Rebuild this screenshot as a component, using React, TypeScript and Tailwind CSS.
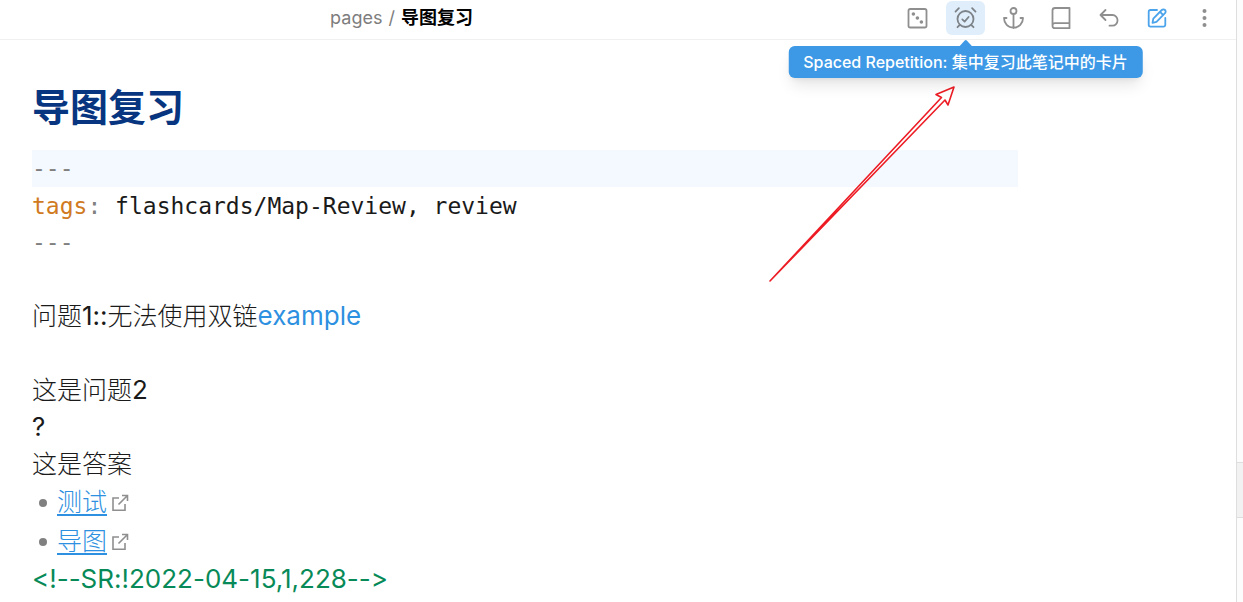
import type { ReactNode } from "react";

const strokeProps = {
  fill: "none",
  stroke: "currentColor",
  strokeWidth: 1.8,
  strokeLinecap: "round" as const,
  strokeLinejoin: "round" as const,
};

function Icon({ children }: { children: ReactNode }) {
  return (
    <svg viewBox="1 0 24 24" className="size-6" aria-hidden="true" {...strokeProps}>
      {children}
    </svg>
  );
}

function DiceIcon() {
  return (
    <Icon>
      <rect x="3.5" y="3" width="18" height="18.5" rx="1.8" />
      <g fill="currentColor" stroke="none">
        <circle cx="8.4" cy="8" r="1.8" />
        <circle cx="12.4" cy="12" r="1.8" />
        <circle cx="16.4" cy="16" r="1.8" />
      </g>
    </Icon>
  );
}

function AlarmIcon() {
  return (
    <Icon>
      <circle cx="12.5" cy="13" r="8" />
      <path d="M9.3 13.4l2.3 2.2 4-4.6M2.5 5.6l3.4-3.4M22.5 5.6l-3.4-3.4M6.8 18.8l-2.3 2.4M18.2 18.8l2.3 2.4" />
    </Icon>
  );
}

function AnchorIcon() {
  return (
    <Icon>
      <circle cx="12.5" cy="5" r="3" />
      <path d="M12.5 8v14M5.5 12H3c0 5.5 4 9.7 9.5 9.7S22 17.5 22 12h-2.5" />
    </Icon>
  );
}

function BookIcon() {
  return (
    <Icon>
      <path d="M20.5 22.2H6a2.5 2.5 0 0 1-2.5-2.5V4.5A2.5 2.5 0 0 1 6 2h14.5zM3.5 19.5A2.5 2.5 0 0 1 6 17.2h14.5" />
    </Icon>
  );
}

function UndoIcon() {
  return (
    <Icon>
      <path d="M8.5 4L3.5 9l5 5M3.5 9H15.5a5 5.3 0 0 1 0 10.7h-3" />
    </Icon>
  );
}

function EditIcon() {
  return (
    <Icon>
      <path d="M12 4H5.5A1.8 1.8 0 0 0 3.7 5.8v13A1.8 1.8 0 0 0 5.5 20.6H18.5a1.8 1.8 0 0 0 1.8-1.8V12M8.3 12.7l8.5-8.7a2.2 2.2 0 0 1 3.2 3.2l-8.5 8.6-4 1zM15 5.8l3.2 3.2" />
    </Icon>
  );
}

function MoreIcon() {
  return (
    <Icon>
      <g fill="currentColor" stroke="none">
        <circle cx="11.5" cy="5" r="2" />
        <circle cx="11.5" cy="12" r="2" />
        <circle cx="11.5" cy="19" r="2" />
      </g>
    </Icon>
  );
}

function ToolButton({ label, className = "text-[#8f8f8f]", children }: { label: string; className?: string; children: ReactNode }) {
  return (
    <button
      type="button"
      aria-label={label}
      className={`relative flex h-[34px] w-[39px] items-center justify-center rounded-md ${className}`}
    >
      {children}
    </button>
  );
}

function Tooltip() {
  return (
    <span
      role="tooltip"
      className="absolute top-[45px] left-1/2 z-10 flex h-8 -translate-x-1/2 items-center rounded-md bg-[#3d99e6] px-[15px] text-base font-medium whitespace-nowrap text-white shadow-lg shadow-black/10"
    >
      <svg viewBox="0 0 14 7" className="absolute -top-1.5 left-1/2 h-[7px] w-3.5 -translate-x-1/2" aria-hidden="true">
        <path d="M0 7L6 .6q1-1 2 0L14 7z" fill="#3d99e6" />
      </svg>
      Spaced Repetition: 集中复习此笔记中的卡片
    </span>
  );
}

function ExternalLink({ text }: { text: string }) {
  return (
    <li className="flex h-[39px] items-center">
      <span className="mr-2.5 ml-[7px] size-2 rounded-full bg-[#808080]" />
      <a href="#" className="flex items-center gap-1 text-[#2e90e0]">
        <span className="font-light underline decoration-2 underline-offset-3">{text}</span>
        <svg viewBox="0 0 18 18" className="size-[18px] text-[#8f8f8f]" fill="none" stroke="currentColor" strokeWidth="1.6" aria-hidden="true">
          <path d="M8 4H2v12.200h12V10M11 1.500h5.500V7M16.500 1.500L7.500 10.500" />
        </svg>
      </a>
    </li>
  );
}

function Line({ children, className = "" }: { children?: ReactNode; className?: string }) {
  return <div className={`h-[37px] ${className}`}>{children}</div>;
}

function Han({ children }: { children: ReactNode }) {
  return <span className="text-[25px] font-light">{children}</span>;
}

export default function App() {
  return (
    <div className="relative flex min-h-screen overflow-hidden bg-white font-['Inter','Noto_Sans_CJK_SC',sans-serif]">
      <div className="min-w-0 flex-1">
        <header className="flex h-10 border-b border-[#f0f0f0]">
          <div className="flex flex-1 items-center justify-center gap-1.5 pb-1 text-lg text-[#7d7d7d]">
            <a href="#">pages</a>
            <span>/</span>
            <span className="text-black">
              <b>导图复习</b>
            </span>
          </div>
          <nav aria-label="Note actions" className="flex gap-[9px] pt-px pr-[11px] pl-[95px]">
            <ToolButton label="Random note">
              <DiceIcon />
            </ToolButton>
            <ToolButton label="Review flashcards" className="bg-[#e0eefb] text-[#7d8388]">
              <AlarmIcon />
              <Tooltip />
            </ToolButton>
            <ToolButton label="Anchor">
              <AnchorIcon />
            </ToolButton>
            <ToolButton label="Open book">
              <BookIcon />
            </ToolButton>
            <ToolButton label="Back">
              <UndoIcon />
            </ToolButton>
            <ToolButton label="Edit" className="text-[#4aa3eb]">
              <EditIcon />
            </ToolButton>
            <ToolButton label="More options">
              <MoreIcon />
            </ToolButton>
          </nav>
        </header>

        <main className="max-w-[1018px] pt-10 pl-8 text-[26px] leading-[35px] text-[#1a1a1a] [font-variant-ligatures:no-contextual]">
          <h1 className="h-[70px] text-[38px] leading-[54px] font-bold text-[#08357f]">导图复习</h1>
          <div className="font-['DejaVu_Sans_Mono',monospace] text-[23px] leading-[39px]">
            <Line className="bg-[#f3f9fe] leading-[37px] text-[#808080]">---</Line>
            <Line>
              <span className="text-[#d07a22]">tags</span>
              <span className="text-[#808080]">:</span> flashcards/Map-Review, review
            </Line>
            <Line className="leading-[37px] text-[#808080]">---</Line>
          </div>
          <Line />
          <Line>
            <Han>问题</Han>1::<Han>无法使用双链</Han>
            <a href="#" className="text-[#2e90e0]">
              example
            </a>
          </Line>
          <Line />
          <Line>
            <Han>这是问题</Han>2
          </Line>
          <Line>?</Line>
          <Line>
            <Han>这是答案</Han>
          </Line>
          <ul className="text-[25px]">
            <ExternalLink text="测试" />
            <ExternalLink text="导图" />
          </ul>
          <Line className="text-[#078a58]">&lt;!--SR:!2022-04-15,1,228--&gt;</Line>
        </main>
      </div>

      <aside className="flex w-[7px] flex-col border-l border-[#dedede] bg-[#fcfcfc] pt-[462px]">
        <div className="h-14 border-y border-[#dedede] bg-[#f2f2f2]" />
      </aside>

      <svg viewBox="0 0 190 200" className="pointer-events-none absolute top-[84px] left-[767px] h-[200px] w-[190px]" aria-hidden="true">
        <path
          d="M3 197L174.500 13.500 169 10.500 187 3 181 21 178 16z"
          fill="#fff"
          stroke="#ed1c24"
          strokeWidth="1.6"
          strokeLinejoin="round"
        />
      </svg>
    </div>
  );
}
